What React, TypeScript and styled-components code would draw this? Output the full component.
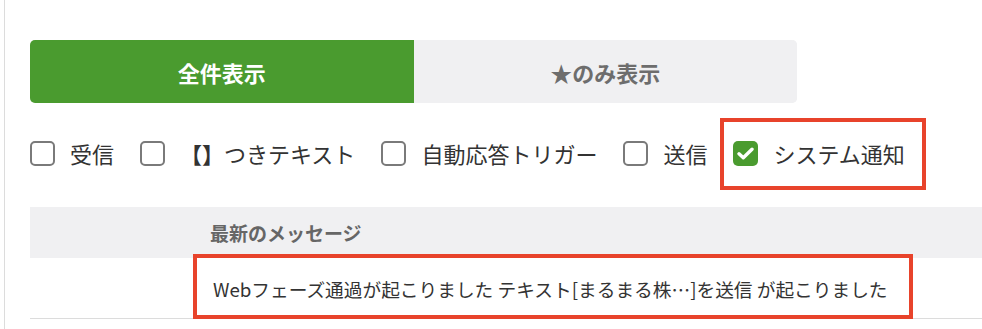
import React, { useState } from "react";
import styled, { createGlobalStyle } from "styled-components";

const GREEN = "#4a9b2f";
const RED = "#e8432b";

const Global = createGlobalStyle`
  html, body { margin: 0; padding: 0; background: #fff; }
  body { font-family: "Noto Sans CJK JP", "Noto Sans", sans-serif; color: #333; }
  * { box-sizing: border-box; }
`;

const Frame = styled.div`
  margin-left: 4px;
  border-left: 1px solid #dcdcdc;
  min-height: 329px;
  padding: 40px 0 0 25px;
`;

const Tabs = styled.div`
  display: flex;
  width: 767px;
  height: 63px;
  border-radius: 5px;
  overflow: hidden;
  background: #f0f0f2;
`;

const Tab = styled.button<{ $active?: boolean }>`
  flex: 1;
  border: none;
  margin: 0;
  padding: 0;
  font-family: inherit;
  font-size: 22px;
  font-weight: 700;
  cursor: pointer;
  background: ${(p) => (p.$active ? GREEN : "#f0f0f2")};
  color: ${(p) => (p.$active ? "#fff" : "#6d6d6d")};
`;

const Filters = styled.div`
  display: flex;
  align-items: center;
  gap: 26px;
  margin-top: 37px;
  height: 26px;
`;

const Item = styled.label<{ $marked?: boolean }>`
  position: relative;
  display: flex;
  align-items: center;
  gap: 15px;
  font-size: 22px;
  color: #333;
  cursor: pointer;
  ${(p) =>
    p.$marked
      ? `&::after {
    content: "";
    position: absolute;
    left: -13px;
    right: -21px;
    top: -19px;
    bottom: -21px;
    border: 4px solid ${RED};
    pointer-events: none;
  }`
      : ""}
`;

const Box = styled.span<{ $checked?: boolean }>`
  width: 25px;
  height: 25px;
  flex: none;
  border-radius: 5px;
  border: ${(p) => (p.$checked ? "none" : "2px solid #7a7a7a")};
  background: ${(p) => (p.$checked ? GREEN : "#fff")};
  display: flex;
  align-items: center;
  justify-content: center;
`;

const Bracket = styled.span`
  font-weight: 700;
`;

const Table = styled.div`
  margin-top: 41px;
`;

const HeadRow = styled.div`
  display: grid;
  grid-template-columns: 164px 1fr;
  height: 51px;
  background: #f0f0f2;
  align-items: center;
`;

const HeadCell = styled.div`
  padding-left: 16px;
  font-size: 19px;
  font-weight: 700;
  color: #666;
`;

const BodyRow = styled.div`
  display: grid;
  grid-template-columns: 164px 1fr;
  height: 61px;
  border-bottom: 1px solid #dcdcdc;
  align-items: center;
`;

const BodyCell = styled.div`
  position: relative;
  height: 100%;
  display: flex;
  align-items: center;
  padding-left: 19px;
  font-size: 18.7px;
  color: #333;
  white-space: nowrap;
`;

const Highlight = styled.div`
  position: absolute;
  left: -1px;
  top: -4px;
  width: 720px;
  height: 65px;
  border: 4px solid ${RED};
  pointer-events: none;
`;

const Check = () => (
  <svg width="17" height="13" viewBox="0 0 17 13" aria-hidden>
    <path d="M2 6.8 L6.3 10.8 L15 2.3" fill="none" stroke="#fff" strokeWidth="3.4" strokeLinecap="round" strokeLinejoin="round" />
  </svg>
);

export default function App() {
  const [all, setAll] = useState(true);
  const items: { key: string; label: React.ReactNode; checked?: boolean }[] = [
    { key: "r", label: "受信" },
    { key: "b", label: (<><Bracket>【】</Bracket>つきテキスト</>) },
    { key: "a", label: "自動応答トリガー" },
    { key: "s", label: "送信" },
    { key: "n", label: "システム通知", checked: true },
  ];
  return (
    <>
      <Global />
      <Frame>
        <Tabs>
          <Tab $active={all} onClick={() => setAll(true)}>全件表示</Tab>
          <Tab $active={!all} onClick={() => setAll(false)}>★のみ表示</Tab>
        </Tabs>
        <Filters>
          {items.map((it) => (
            <Item key={it.key} $marked={it.checked}>
              <Box $checked={it.checked}>{it.checked && <Check />}</Box>
              <span>{it.label}</span>
            </Item>
          ))}
        </Filters>
        <Table>
          <HeadRow>
            <div />
            <HeadCell>最新のメッセージ</HeadCell>
          </HeadRow>
          <BodyRow>
            <div />
            <BodyCell>
              Webフェーズ通過が起こりました テキスト[まるまる株…]を送信 が起こりました
              <Highlight />
            </BodyCell>
          </BodyRow>
        </Table>
      </Frame>
    </>
  );
}
